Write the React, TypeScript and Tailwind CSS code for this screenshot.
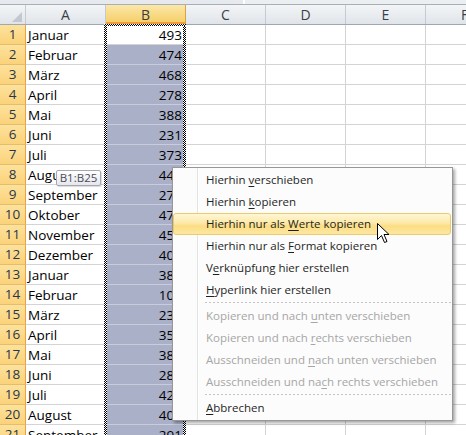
import React from "react";

const months = ["Januar","Februar","März","April","Mai","Juni","Juli","August","September","Oktober","November","Dezember","Januar","Februar","März","April","Mai","Juni","Juli","August","September"];
const values = [493,474,468,278,388,231,373,448,275,471,455,406,387,104,235,355,387,285,425,406,291];

type Item = { pre: string; u: string; post: string; disabled?: boolean; hover?: boolean } | "sep";

const items: Item[] = [
  { pre: "Hierhin ", u: "v", post: "erschieben" },
  { pre: "Hierhin ", u: "k", post: "opieren" },
  { pre: "Hierhin nur als ", u: "W", post: "erte kopieren", hover: true },
  { pre: "Hierhin nur als ", u: "F", post: "ormat kopieren" },
  { pre: "V", u: "e", post: "rknüpfung hier erstellen" },
  { pre: "", u: "H", post: "yperlink hier erstellen" },
  "sep",
  { pre: "Kopieren und nach ", u: "u", post: "nten verschieben", disabled: true },
  { pre: "Kopieren und nach ", u: "r", post: "echts verschieben", disabled: true },
  { pre: "Ausschneiden und ", u: "n", post: "ach unten verschieben", disabled: true },
  { pre: "Ausschneiden und na", u: "c", post: "h rechts verschieben", disabled: true },
  "sep",
  { pre: "", u: "A", post: "bbrechen" },
];

const colHead =
  "h-full shrink-0 w-[80px] flex items-center justify-center border-r border-[#c5cad2] bg-[linear-gradient(#f3f5f7,#e0e4e9)] text-[14px] text-[#3a3f47]";

export default function App() {
  return (
    <div className="relative w-[466px] h-[435px] overflow-hidden bg-white font-['Open_Sans',sans-serif]">
      {/* top strip */}
      <div className="h-[5px] flex border-b border-[#a8afb9] bg-[#eef0f3]">
        <div className="w-[243px] h-full bg-[#e6e9ee]" />
        <div className="w-[2px] h-full bg-white" />
        <div className="flex-1 h-full bg-[#eceff2]" />
      </div>
      {/* header row */}
      <div className="flex h-[20px] border-b border-[#9ea8b5]">
        <div className="relative h-full w-[26px] shrink-0 border-r border-[#c5cad2] bg-[linear-gradient(#f3f5f7,#e0e4e9)]">
          <svg className="absolute left-0 top-0" width="26" height="20">
            <polygon points="22,7 22,17 12,17" fill="#c3c8d0" />
          </svg>
        </div>
        <div className={colHead}>A</div>
        <div className="h-full shrink-0 w-[80px] flex items-center justify-center border-r border-[#d9a43e] bg-[linear-gradient(#fbe7a8,#f5cd63)] text-[14px] text-[#3a3f47] shadow-[inset_0_-2px_0_#f29b3a]">
          B
        </div>
        <div className={colHead}>C</div>
        <div className={colHead}>D</div>
        <div className={colHead}>E</div>
        <div className="h-full shrink-0 w-[80px] flex items-center pl-[35px] bg-[linear-gradient(#f3f5f7,#e0e4e9)] text-[14px] text-[#3a3f47]">F</div>
      </div>
      {/* rows */}
      {months.map((m, i) => (
        <div key={i} className="flex h-[20px]">
          <div className="h-full w-[26px] shrink-0 flex items-center justify-center border-r border-b border-r-[#f0a03c] border-b-[#e6bd6c] bg-[linear-gradient(#fde29c,#fbd27a)] text-[13.5px] text-[#28374c]">
            {i + 1}
          </div>
          <div className="h-full w-[80px] shrink-0 flex items-center pl-[2px] pt-[1px] border-r border-b border-[#d4d4d4] text-[13.5px] text-black whitespace-nowrap overflow-hidden">
            {m}
          </div>
          <div
            className={
              "h-full w-[80px] shrink-0 flex items-center justify-end pr-[4px] pt-[1px] text-[13.5px] text-black " +
              (i === 0 ? "bg-white border-b border-[#d4d4d4]" : "bg-[#a9b0c8] border-b border-[#c9cddb]")
            }
          >
            {values[i]}
          </div>
          <div className="h-full w-[80px] shrink-0 border-r border-b border-[#d4d4d4]" />
          <div className="h-full w-[80px] shrink-0 border-r border-b border-[#d4d4d4]" />
          <div className="h-full w-[80px] shrink-0 border-r border-b border-[#d4d4d4]" />
          <div className="h-full w-[80px] shrink-0 border-r border-b border-[#d4d4d4]" />
        </div>
      ))}

      {/* marching ants around column B */}
      <div className="absolute left-[104px] top-[24px] w-[3px] h-[420px] bg-[image:repeating-conic-gradient(#000_0%_25%,#fff_0%_50%)] bg-[length:2px_2px]" />
      <div className="absolute left-[183px] top-[24px] w-[3px] h-[420px] bg-[image:repeating-conic-gradient(#000_0%_25%,#fff_0%_50%)] bg-[length:2px_2px]" />
      <div className="absolute left-[104px] top-[24px] w-[82px] h-[2px] bg-[image:repeating-conic-gradient(#000_0%_25%,#fff_0%_50%)] bg-[length:2px_2px]" />

      {/* tooltip */}
      <div className="absolute left-[56px] top-[170px] h-[16px] w-[45px] flex items-center justify-center rounded-[2px] border border-[#a7a7ad] bg-[linear-gradient(#ffffff,#e6e7ee)] text-[11.5px] leading-none text-[#4b4b55] shadow-[1px_1px_1px_rgba(0,0,0,0.15)]">
        B1:B25
      </div>

      {/* context menu */}
      <div className="absolute left-[172px] top-[167px] w-[281px] border border-[#979797] bg-[#fcfcfc] py-[1px] shadow-[2px_2px_3px_rgba(0,0,0,0.35)]">
        <div className="absolute left-[24px] top-0 bottom-0 w-[2px] border-l border-[#e2e3e3] bg-white" />
        <div className="relative flex flex-col">
          {items.map((it, i) =>
            it === "sep" ? (
              <div key={i} className="h-[4px] flex items-start pl-[32px] pr-[1px] pt-[1px]">
                <div className="h-[1px] w-full bg-[image:repeating-linear-gradient(90deg,#c5c5c5_0_2px,transparent_2px_4px)]" />
              </div>
            ) : (
              <div
                key={i}
                className={
                  "h-[22px] flex items-center mr-[1px] text-[11.5px] whitespace-pre " +
                  (it.hover
                    ? "rounded-[3px] border border-[#eccb6c] bg-[linear-gradient(#fef6d6_0%,#fde9a8_45%,#fcdd82_60%,#fde8a2_100%)] pl-[32px] "
                    : "pl-[33px] ") +
                  (it.disabled ? "text-[#a6a6a6]" : "text-[#1f1f1f]")
                }
              >
                <span>
                  {it.pre}
                  <span className="underline underline-offset-[2px]">{it.u}</span>
                  {it.post}
                </span>
              </div>
            )
          )}
        </div>
      </div>

      {/* mouse cursor */}
      <svg className="absolute left-[377px] top-[223px]" width="14" height="22" viewBox="0 0 14 22">
        <path d="M0.5 0.5 L0.5 16.5 L4.5 12.5 L7.5 19.5 L10 18.5 L7 11.5 L12 11.5 Z" fill="#fff" stroke="#000" strokeWidth="1" strokeLinejoin="miter" />
      </svg>
    </div>
  );
}
